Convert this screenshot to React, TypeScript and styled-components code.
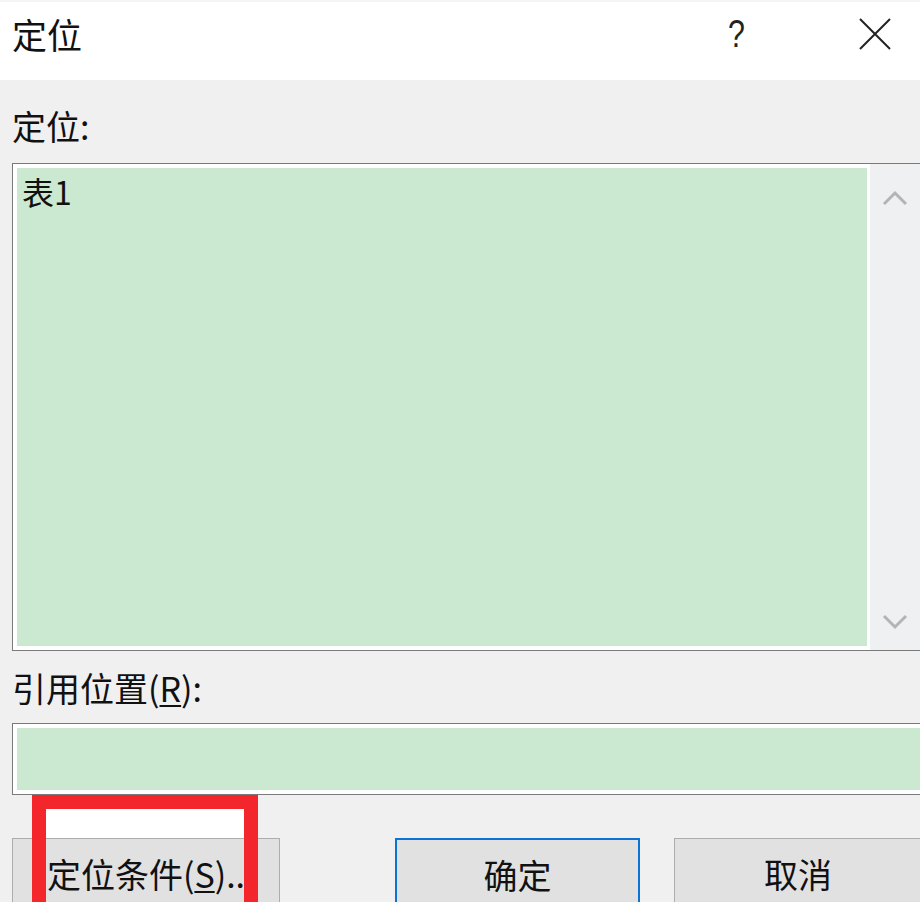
import styled, { createGlobalStyle } from "styled-components";

const GlobalStyle = createGlobalStyle`
  html, body {
    margin: 0;
    padding: 0;
    background: #f0f0f0;
  }
  body {
    font-family: "Noto Sans CJK SC", "Microsoft YaHei", sans-serif;
    color: #111;
  }
`;

const Dialog = styled.div`
  position: relative;
  width: 920px;
  height: 902px;
  overflow: hidden;
  background: #f0f0f1;
  display: flex;
  flex-direction: column;
`;

const TitleBar = styled.div`
  height: 80px;
  flex-shrink: 0;
  background: #fff;
  border-top: 2px solid #f4f4f4;
  box-sizing: border-box;
  display: flex;
  align-items: center;
  padding-left: 12px;
`;

const Title = styled.div`
  flex: 1;
  font-size: 35px;
  line-height: 1;
  margin-top: -16px;
`;

const HelpMark = styled.div`
  font-family: "Liberation Sans", sans-serif;
  font-weight: 300;
  font-size: 38px;
  line-height: 1;
  color: #222;
  margin-right: 112px;
  margin-top: -14px;
  transform: scaleX(0.8);
`;

const CloseIcon = styled.svg`
  width: 32px;
  height: 32px;
  margin-right: 29px;
  margin-top: -14px;
`;

const Body = styled.div`
  padding-left: 12px;
  display: flex;
  flex-direction: column;
`;

const Label = styled.div<{ $top: number }>`
  font-size: 34px;
  line-height: 40px;
  margin-top: ${(p) => p.$top}px;
  height: 40px;
`;

const Key = styled.span`
  text-decoration: underline;
  text-underline-offset: 3px;
  text-decoration-thickness: 2px;
`;

const FieldFrame = styled.div<{ $height: number; $top: number }>`
  width: 930px;
  height: ${(p) => p.$height}px;
  margin-top: ${(p) => p.$top}px;
  box-sizing: border-box;
  border: 1px solid #7a7a7a;
  border-right: none;
  background: #fff;
  padding: 4px 0 4px 4px;
  display: flex;
  flex-shrink: 0;
`;

const GreenArea = styled.div`
  flex: 1;
  background: #cbe8d1;
  font-size: 32px;
  line-height: 1;
  padding: 7px 0 0 5px;
`;

const ScrollBar = styled.div`
  width: 72px;
  margin: -4px 0 -4px 3px;
  background: #eef0f2;
  display: flex;
  flex-direction: column;
  justify-content: space-between;
  padding: 26px 0 20px 12px;
  box-sizing: border-box;
`;

const Chevron = styled.svg`
  width: 26px;
  height: 16px;
`;

const ButtonRow = styled.div`
  display: flex;
  margin-top: 43px;
`;

const Button = styled.div<{ $width: number; $gap: number; $primary?: boolean }>`
  width: ${(p) => p.$width}px;
  height: 80px;
  margin-left: ${(p) => p.$gap}px;
  flex-shrink: 0;
  box-sizing: border-box;
  background: #e1e1e1;
  border: ${(p) => (p.$primary ? "2px solid #0a74d6" : "1px solid #adadad")};
  display: flex;
  justify-content: center;
  padding-top: 15px;
  font-size: 34px;
  line-height: 1.2;
  white-space: nowrap;
`;

const Highlight = styled.div`
  position: absolute;
  left: 32px;
  top: 795px;
  width: 226px;
  height: 130px;
  box-sizing: border-box;
  border: 14px solid #f2262b;
  background: linear-gradient(#ffffff 0 29px, transparent 29px);
  pointer-events: none;
`;

export default function App() {
  return (
    <>
      <GlobalStyle />
      <Dialog>
        <TitleBar>
          <Title>定位</Title>
          <HelpMark>?</HelpMark>
          <CloseIcon viewBox="0 0 32 32">
            <path d="M1 1 L31 31 M31 1 L1 31" stroke="#222" strokeWidth="2" fill="none" />
          </CloseIcon>
        </TitleBar>
        <Body>
          <Label $top={26}>定位:</Label>
          <FieldFrame $height={488} $top={17}>
            <GreenArea>表1</GreenArea>
            <ScrollBar>
              <Chevron viewBox="0 0 26 16">
                <path d="M2 14 L13 3 L24 14" stroke="#b4b4b4" strokeWidth="3" fill="none" />
              </Chevron>
              <Chevron viewBox="0 0 26 16">
                <path d="M2 2 L13 13 L24 2" stroke="#b4b4b4" strokeWidth="3" fill="none" />
              </Chevron>
            </ScrollBar>
          </FieldFrame>
          <Label $top={17}>
            引用位置(<Key>R</Key>):
          </Label>
          <FieldFrame $height={72} $top={15}>
            <GreenArea />
          </FieldFrame>
          <ButtonRow>
            <Button $width={268} $gap={0}>
              <span>
                定位条件(<Key>S</Key>)..
              </span>
            </Button>
            <Button $width={245} $gap={115} $primary>
              确定
            </Button>
            <Button $width={248} $gap={34}>
              取消
            </Button>
          </ButtonRow>
        </Body>
        <Highlight />
      </Dialog>
    </>
  );
}
